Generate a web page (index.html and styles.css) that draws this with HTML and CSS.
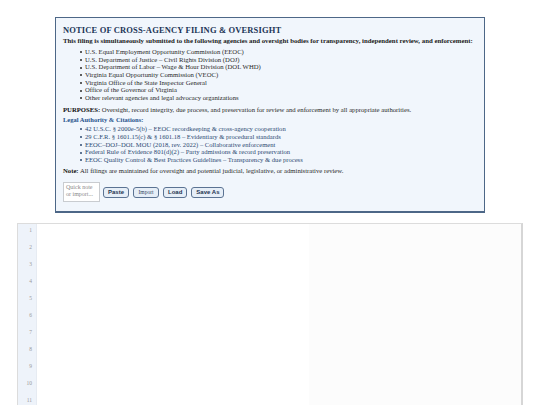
FILE: index.html
```html
<!DOCTYPE html>
<html lang="en">
<head>
<meta charset="utf-8">
<title>Notice of Cross-Agency Filing</title>
<link rel="stylesheet" href="styles.css">
</head>
<body>
<div class="page">
  <section class="notice">
    <h2 class="notice-title">NOTICE OF CROSS-AGENCY FILING &amp; OVERSIGHT</h2>
    <p class="lead">This filing is simultaneously submitted to the following agencies and oversight bodies for transparency, independent review, and enforcement:</p>
    <ul class="agencies">
      <li>U.S. Equal Employment Opportunity Commission (EEOC)</li>
      <li>U.S. Department of Justice – Civil Rights Division (DOJ)</li>
      <li>U.S. Department of Labor – Wage &amp; Hour Division (DOL WHD)</li>
      <li>Virginia Equal Opportunity Commission (VEOC)</li>
      <li>Virginia Office of the State Inspector General</li>
      <li>Office of the Governor of Virginia</li>
      <li>Other relevant agencies and legal advocacy organizations</li>
    </ul>
    <p class="purposes"><strong>PURPOSES:</strong> Oversight, record integrity, due process, and preservation for review and enforcement by all appropriate authorities.</p>
    <p class="legal-title">Legal Authority &amp; Citations:</p>
    <ul class="citations">
      <li>42 U.S.C. § 2000e-5(b) – EEOC recordkeeping &amp; cross-agency cooperation</li>
      <li>29 C.F.R. § 1601.15(c) &amp; § 1601.18 – Evidentiary &amp; procedural standards</li>
      <li>EEOC–DOJ–DOL MOU (2018, rev. 2022) – Collaborative enforcement</li>
      <li>Federal Rule of Evidence 801(d)(2) – Party admissions &amp; record preservation</li>
      <li>EEOC Quality Control &amp; Best Practices Guidelines – Transparency &amp; due process</li>
    </ul>
    <p class="note"><strong>Note:</strong> All filings are maintained for oversight and potential judicial, legislative, or administrative review.</p>
    <div class="actions">
      <textarea class="quick" placeholder="Quick note or import..."></textarea>
      <button class="btn">Paste</button>
      <button class="btn btn-import">Import</button>
      <button class="btn">Load</button>
      <button class="btn">Save As</button>
    </div>
  </section>

  <section class="editor">
    <div class="gutter">
      <div class="ln">1</div><div class="ln">2</div><div class="ln">3</div><div class="ln">4</div>
      <div class="ln">5</div><div class="ln">6</div><div class="ln">7</div><div class="ln">8</div>
      <div class="ln">9</div><div class="ln">10</div><div class="ln">11</div>
    </div>
    <div class="pane-edit"></div>
    <div class="pane-preview"></div>
  </section>
</div>
</body>
</html>
```
FILE: styles.css
```css
html, body {
  margin: 0;
  padding: 0;
  background: #ffffff;
}

body {
  font-family: "Liberation Serif", "Times New Roman", serif;
  font-size: 6.7px;
  line-height: 7.65px;
  color: #222;
  overflow: hidden;
}

.page {
  padding-top: 17px;
}

.notice {
  width: 414px;
  margin: 0 auto;
  background: #f1f6fc;
  border: 1px solid #4d6787;
  border-bottom-width: 2px;
  padding: 7px 7px 9px 7px;
}

.notice-title {
  margin: 0 0 2px 0;
  font-size: 8.5px;
  line-height: 10px;
  font-weight: bold;
  letter-spacing: 0.15px;
  color: #1c3557;
}

.lead {
  margin: 0;
  font-weight: bold;
  font-size: 6.8px;
  color: #1a1a1a;
}

ul {
  margin: 0;
  padding-left: 22px;
  list-style: none;
}

ul li {
  position: relative;
}

ul li::before {
  content: "";
  position: absolute;
  left: -5px;
  top: 3.4px;
  width: 2px;
  height: 2px;
  border-radius: 50%;
  background: currentColor;
}

.agencies {
  margin-top: 3.3px;
  color: #2a2a2a;
}

.purposes {
  margin: 4.5px 0 0 0;
  color: #2a2a2a;
}

.purposes strong {
  color: #111;
}

.legal-title {
  margin: 2.4px 0 0 0;
  font-weight: bold;
  color: #24508a;
  font-size: 6.5px;
}

.citations {
  margin-top: 1.3px;
  line-height: 7.75px;
  font-size: 6.6px;
  color: #2d4a72;
}

.note {
  margin: 3.25px 0 0 0;
  color: #2a2a2a;
}

.note strong {
  color: #111;
}

.actions {
  display: flex;
  align-items: center;
  gap: 4px;
  margin-top: 7.1px;
}

.quick {
  box-sizing: border-box;
  width: 37px;
  height: 20px;
  margin: 0 -1px 0 0;
  padding: 1px 2px;
  border: 1px solid #c9ccd0;
  border-radius: 0;
  background: #ffffff;
  font-family: "Liberation Serif", "Times New Roman", serif;
  font-size: 6px;
  line-height: 7px;
  resize: none;
  overflow: hidden;
}

.quick::placeholder {
  color: #8a8a8a;
}

.btn {
  box-sizing: border-box;
  height: 11px;
  padding: 0 4px;
  margin-top: 2px;
  border: 1px solid #5b7393;
  border-radius: 3px;
  background: #e6eef7;
  font-family: "Liberation Sans", Arial, sans-serif;
  font-size: 6px;
  font-weight: 600;
  line-height: 9px;
  color: #1d3350;
}

.btn-import {
  font-family: "Liberation Serif", "Times New Roman", serif;
  font-weight: normal;
  font-size: 5.5px;
  padding: 0 4.5px;
  color: #34465f;
}

.editor {
  display: flex;
  margin: 10px 17px 0 17px;
  height: 181px;
  border: 1px solid #dcdcdc;
  border-right: 2px solid #d6d6d6;
  border-bottom: none;
  background: #ffffff;
  overflow: hidden;
}

.gutter {
  flex: 0 0 19px;
  background: #eef3fa;
  border-right: 1px solid #e6ebf2;
  text-align: right;
  font-size: 5.5px;
  color: #9a9a9a;
  padding-right: 4px;
  box-sizing: border-box;
}

.ln {
  height: 17px;
  line-height: 12px;
}

.pane-edit {
  flex: 0 0 272px;
  background: #ffffff;
}

.pane-preview {
  flex: 1 1 auto;
  background: #fcfcfc;
}
```
